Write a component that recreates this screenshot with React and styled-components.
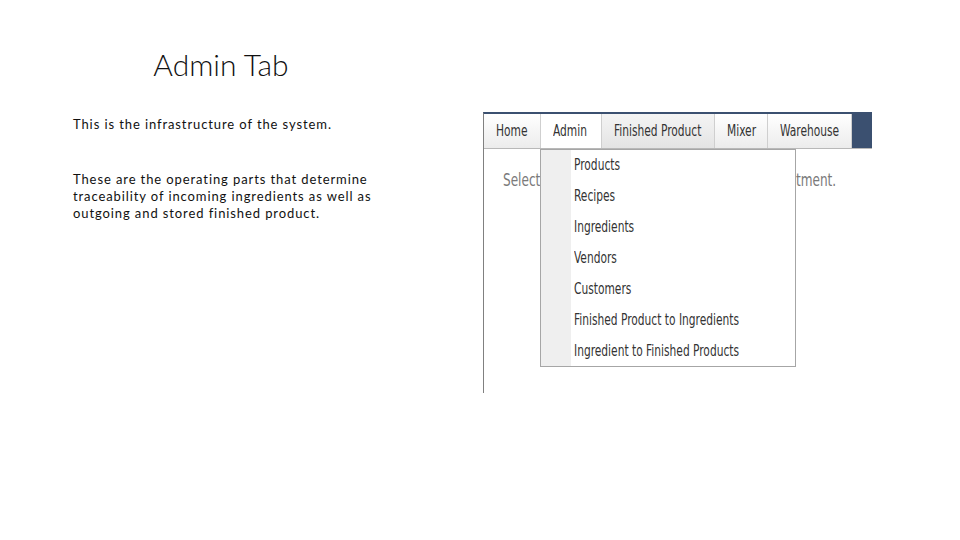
import React from 'react';
import styled, { createGlobalStyle } from 'styled-components';

const GlobalStyle = createGlobalStyle`
  html, body {
    margin: 0;
    padding: 0;
    background: #ffffff;
  }
  body {
    width: 960px;
    height: 540px;
    overflow: hidden;
    font-family: Lato, "Open Sans", sans-serif;
  }
`;

const tabs = [
  { label: 'Home', width: 57 },
  { label: 'Admin', width: 61 },
  { label: 'Finished Product', width: 113 },
  { label: 'Mixer', width: 53 },
  { label: 'Warehouse', width: 84 },
];

const menuItems = [
  'Products',
  'Recipes',
  'Ingredients',
  'Vendors',
  'Customers',
  'Finished Product to Ingredients',
  'Ingredient to Finished Products',
];

const App = () => {
  return (
    <>
      <GlobalStyle />
      <Slide>
        <TextColumn>
          <Title>Admin Tab</Title>
          <Paragraph>This is the infrastructure of the system.</Paragraph>
          <Paragraph $gap>
            These are the operating parts that determine traceability of incoming
            ingredients as well as outgoing and stored finished product.
          </Paragraph>
        </TextColumn>
        <Shot>
          <NavBar>
            {tabs.map((tab) => (
              <Tab
                key={tab.label}
                $width={tab.width}
                $active={tab.label === 'Admin'}
                $hover={tab.label === 'Finished Product'}
              >
                <Narrow>{tab.label}</Narrow>
              </Tab>
            ))}
            <NavFill />
          </NavBar>
          <Content>
            <ContentText>Select</ContentText>
            <ContentText $width={76}>tment.</ContentText>
          </Content>
          <Menu>
            <MenuStrip />
            <MenuList>
              {menuItems.map((item) => (
                <MenuItem key={item}>
                  <Narrow>{item}</Narrow>
                </MenuItem>
              ))}
            </MenuList>
          </Menu>
        </Shot>
      </Slide>
    </>
  );
};

export default App;

const Slide = styled.div`
  display: flex;
  align-items: flex-start;
  width: 960px;
  height: 540px;
`;

const TextColumn = styled.div`
  width: 310px;
  margin-left: 73px;
  padding-top: 45px;
`;

const Title = styled.h1`
  width: 296px;
  margin: 0 0 33px;
  text-align: center;
  font-family: Lato, sans-serif;
  font-weight: 300;
  font-size: 30px;
  line-height: 38px;
  color: #111;
`;

const Paragraph = styled.p`
  margin: ${({ $gap }) => ($gap ? '38px 0 0' : '0')};
  font-family: Lato, sans-serif;
  font-size: 13px;
  line-height: 17px;
  letter-spacing: 0.9px;
  color: #111;
`;

const Shot = styled.div`
  position: relative;
  margin-left: 100px;
  margin-top: 112px;
  width: 389px;
  height: 281px;
  border-top: 2px solid #3b5070;
  border-left: 1px solid #808080;
  box-sizing: border-box;
  font-family: "DejaVu Sans Condensed", "DejaVu Sans", sans-serif;
`;

const Narrow = styled.span`
  display: inline-block;
  white-space: nowrap;
  transform: scaleX(0.79);
  transform-origin: left center;
`;

const NavBar = styled.div`
  display: flex;
  height: 35px;
  border-bottom: 1px solid #b8b8b8;
  box-sizing: border-box;
`;

const Tab = styled.div`
  display: flex;
  align-items: center;
  width: ${({ $width }) => $width}px;
  flex-shrink: 0;
  padding-left: 12px;
  box-sizing: border-box;
  font-size: 15px;
  color: #333;
  border-right: 1px solid #cfcfcf;
  background: ${({ $active, $hover }) =>
    $active
      ? '#ffffff'
      : $hover
      ? 'linear-gradient(#f4f4f4, #e4e4e4)'
      : 'linear-gradient(#ffffff, #ececec)'};
`;

const NavFill = styled.div`
  flex: 1;
  margin-top: -2px;
  background: #3b5070;
`;

const Content = styled.div`
  display: flex;
  justify-content: space-between;
  padding: 21px 0 0 19px;
`;

const ContentText = styled.span`
  display: inline-block;
  width: ${({ $width }) => ($width ? `${$width}px` : 'auto')};
  white-space: nowrap;
  font-size: 17px;
  color: #7a7a7a;
  transform: scaleX(0.79);
  transform-origin: left center;
`;

const Menu = styled.div`
  position: absolute;
  left: 56px;
  top: 35px;
  width: 256px;
  height: 218px;
  display: flex;
  background: #ffffff;
  border: 1px solid #a6a6a6;
  box-sizing: border-box;
`;

const MenuStrip = styled.div`
  width: 30px;
  background: #efefef;
`;

const MenuList = styled.div`
  display: flex;
  flex-direction: column;
  padding: 5px 0 0 3px;
`;

const MenuItem = styled.div`
  flex-shrink: 0;
  height: 31px;
  font-size: 15px;
  line-height: 20px;
  color: #333;
`;
